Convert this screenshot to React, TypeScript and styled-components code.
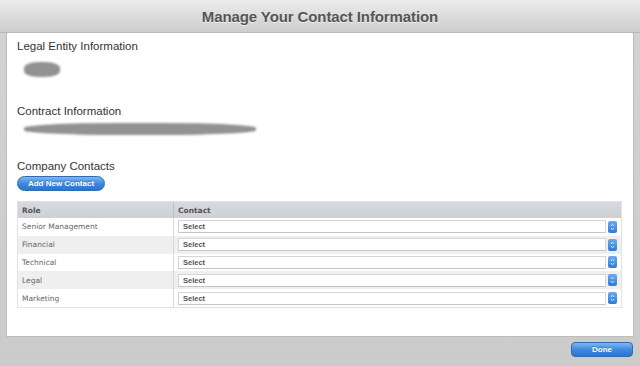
import React from "react";
import styled, { createGlobalStyle } from "styled-components";

const GlobalStyle = createGlobalStyle`
  html, body {
    margin: 0;
    padding: 0;
    background: #d4d4d4;
  }
  * { box-sizing: border-box; }
`;

const Window = styled.div`
  width: 640px;
  height: 366px;
  display: flex;
  flex-direction: column;
  background: linear-gradient(#d3d3d3, #cbcbcb);
  font-family: "DejaVu Sans", "Liberation Sans", sans-serif;
  overflow: hidden;
`;

const TitleBar = styled.div`
  height: 33px;
  flex: none;
  display: flex;
  align-items: center;
  justify-content: center;
  background: linear-gradient(#ececec, #d9d9d9 60%, #cdcdcd);
  border-bottom: 1px solid #b8b8b8;
`;

const Title = styled.h1`
  margin: 0;
  font-family: "Liberation Sans", Arial, sans-serif;
  font-size: 15px;
  font-weight: bold;
  color: #555;
  letter-spacing: -0.1px;
  text-shadow: 0 1px 0 rgba(255, 255, 255, 0.6);
`;

const Body = styled.div`
  flex: none;
  height: 304px;
  padding: 0 6px 0 6px;
`;

const Panel = styled.div`
  height: 100%;
  background: #fff;
  border: 1px solid #bdbdbd;
  border-top: none;
  padding: 6px 11px 0 10px;
  display: flex;
  flex-direction: column;
`;

const SectionTitle = styled.h2`
  margin: 0;
  font-family: "Liberation Sans", Arial, sans-serif;
  font-size: 11.5px;
  font-weight: normal;
  color: #333;
  line-height: 14px;
`;

const Redacted = styled.div<{ $w: number; $h: number; $ml: number }>`
  width: ${(p) => p.$w}px;
  height: ${(p) => p.$h}px;
  margin-left: ${(p) => p.$ml}px;
  background: #929292;
  border-radius: 40%;
  filter: blur(1px);
`;

const Section = styled.div<{ $gap: number; $mb: number }>`
  display: flex;
  flex-direction: column;
  gap: ${(p) => p.$gap}px;
  margin-bottom: ${(p) => p.$mb}px;
`;

const BlueButton = styled.button<{ $w: number; $r: number }>`
  width: ${(p) => p.$w}px;
  height: 15px;
  border: 1px solid #2f6cb3;
  border-radius: ${(p) => p.$r}px;
  background: linear-gradient(#7fb6ee, #3f8ae0 50%, #2a74cf);
  color: #fff;
  font-family: "Liberation Sans", Arial, sans-serif;
  font-size: 8px;
  font-weight: bold;
  padding: 0;
  line-height: 13px;
  text-shadow: 0 -1px 0 rgba(0, 0, 0, 0.2);
`;

const Table = styled.div`
  margin-top: 10px;
  border: 1px solid #e2e2e2;
  display: grid;
  grid-template-columns: 155px 1fr;
`;

const HeadCell = styled.div`
  height: 16px;
  background: linear-gradient(#d6d9de, #cdd0d5);
  font-size: 7.5px;
  font-weight: bold;
  color: #555;
  display: flex;
  align-items: center;
  padding-left: 4px;
  & + & {
    border-left: 1px solid #bfc2c7;
  }
`;

const RoleCell = styled.div<{ $alt: boolean }>`
  height: 17.8px;
  background: ${(p) => (p.$alt ? "#efefef" : "#fff")};
  font-size: 7.5px;
  color: #666;
  display: flex;
  align-items: center;
  padding-left: 4px;
`;

const ContactCell = styled.div<{ $alt: boolean }>`
  height: 17.8px;
  background: ${(p) => (p.$alt ? "#efefef" : "#fff")};
  border-left: 1px solid #d8d8d8;
  display: flex;
  align-items: center;
  padding: 0 4px 0 4px;
  gap: 2px;
`;

const SelectBox = styled.div`
  flex: 1;
  height: 13px;
  background: #fff;
  border: 1px solid #d6d6d6;
  border-bottom-color: #c4c4c4;
  font-family: "Liberation Sans", Arial, sans-serif;
  font-size: 7.5px;
  font-weight: bold;
  color: #555;
  display: flex;
  align-items: center;
  padding-left: 4px;
`;

const Stepper = styled.div`
  width: 9px;
  height: 12px;
  border-radius: 2px;
  background: linear-gradient(#6aaaf0, #2f7ad6);
  display: flex;
  align-items: center;
  justify-content: center;
`;

const Footer = styled.div`
  flex: 1;
  display: flex;
  align-items: center;
  justify-content: flex-end;
  padding: 0 7px 4px 0;
`;

const roles = ["Senior Management", "Financial", "Technical", "Legal", "Marketing"];

const StepperIcon = () => (
  <Stepper>
    <svg width="5" height="8" viewBox="0 0 5 8">
      <path d="M0.8 3 L2.5 1.2 L4.2 3" fill="none" stroke="#e8f2ff" strokeWidth="0.9" />
      <path d="M0.8 5 L2.5 6.8 L4.2 5" fill="none" stroke="#e8f2ff" strokeWidth="0.9" />
    </svg>
  </Stepper>
);

export default function App() {
  return (
    <Window>
      <GlobalStyle />
      <TitleBar>
        <Title>Manage Your Contact Information</Title>
      </TitleBar>
      <Body>
        <Panel>
          <Section $gap={9} $mb={27}>
            <SectionTitle>Legal Entity Information</SectionTitle>
            <Redacted $w={36} $h={15} $ml={7} />
          </Section>
          <Section $gap={5} $mb={24}>
            <SectionTitle>Contract Information</SectionTitle>
            <Redacted $w={232} $h={12} $ml={7} />
          </Section>
          <Section $gap={3} $mb={0}>
            <SectionTitle>Company Contacts</SectionTitle>
            <BlueButton $w={88} $r={8}>Add New Contact</BlueButton>
          </Section>
          <Table>
            <HeadCell>Role</HeadCell>
            <HeadCell>Contact</HeadCell>
            {roles.map((r, i) => (
              <React.Fragment key={r}>
                <RoleCell $alt={i % 2 === 1}>{r}</RoleCell>
                <ContactCell $alt={i % 2 === 1}>
                  <SelectBox>Select</SelectBox>
                  <StepperIcon />
                </ContactCell>
              </React.Fragment>
            ))}
          </Table>
        </Panel>
      </Body>
      <Footer>
        <BlueButton $w={62} $r={4}>Done</BlueButton>
      </Footer>
    </Window>
  );
}
